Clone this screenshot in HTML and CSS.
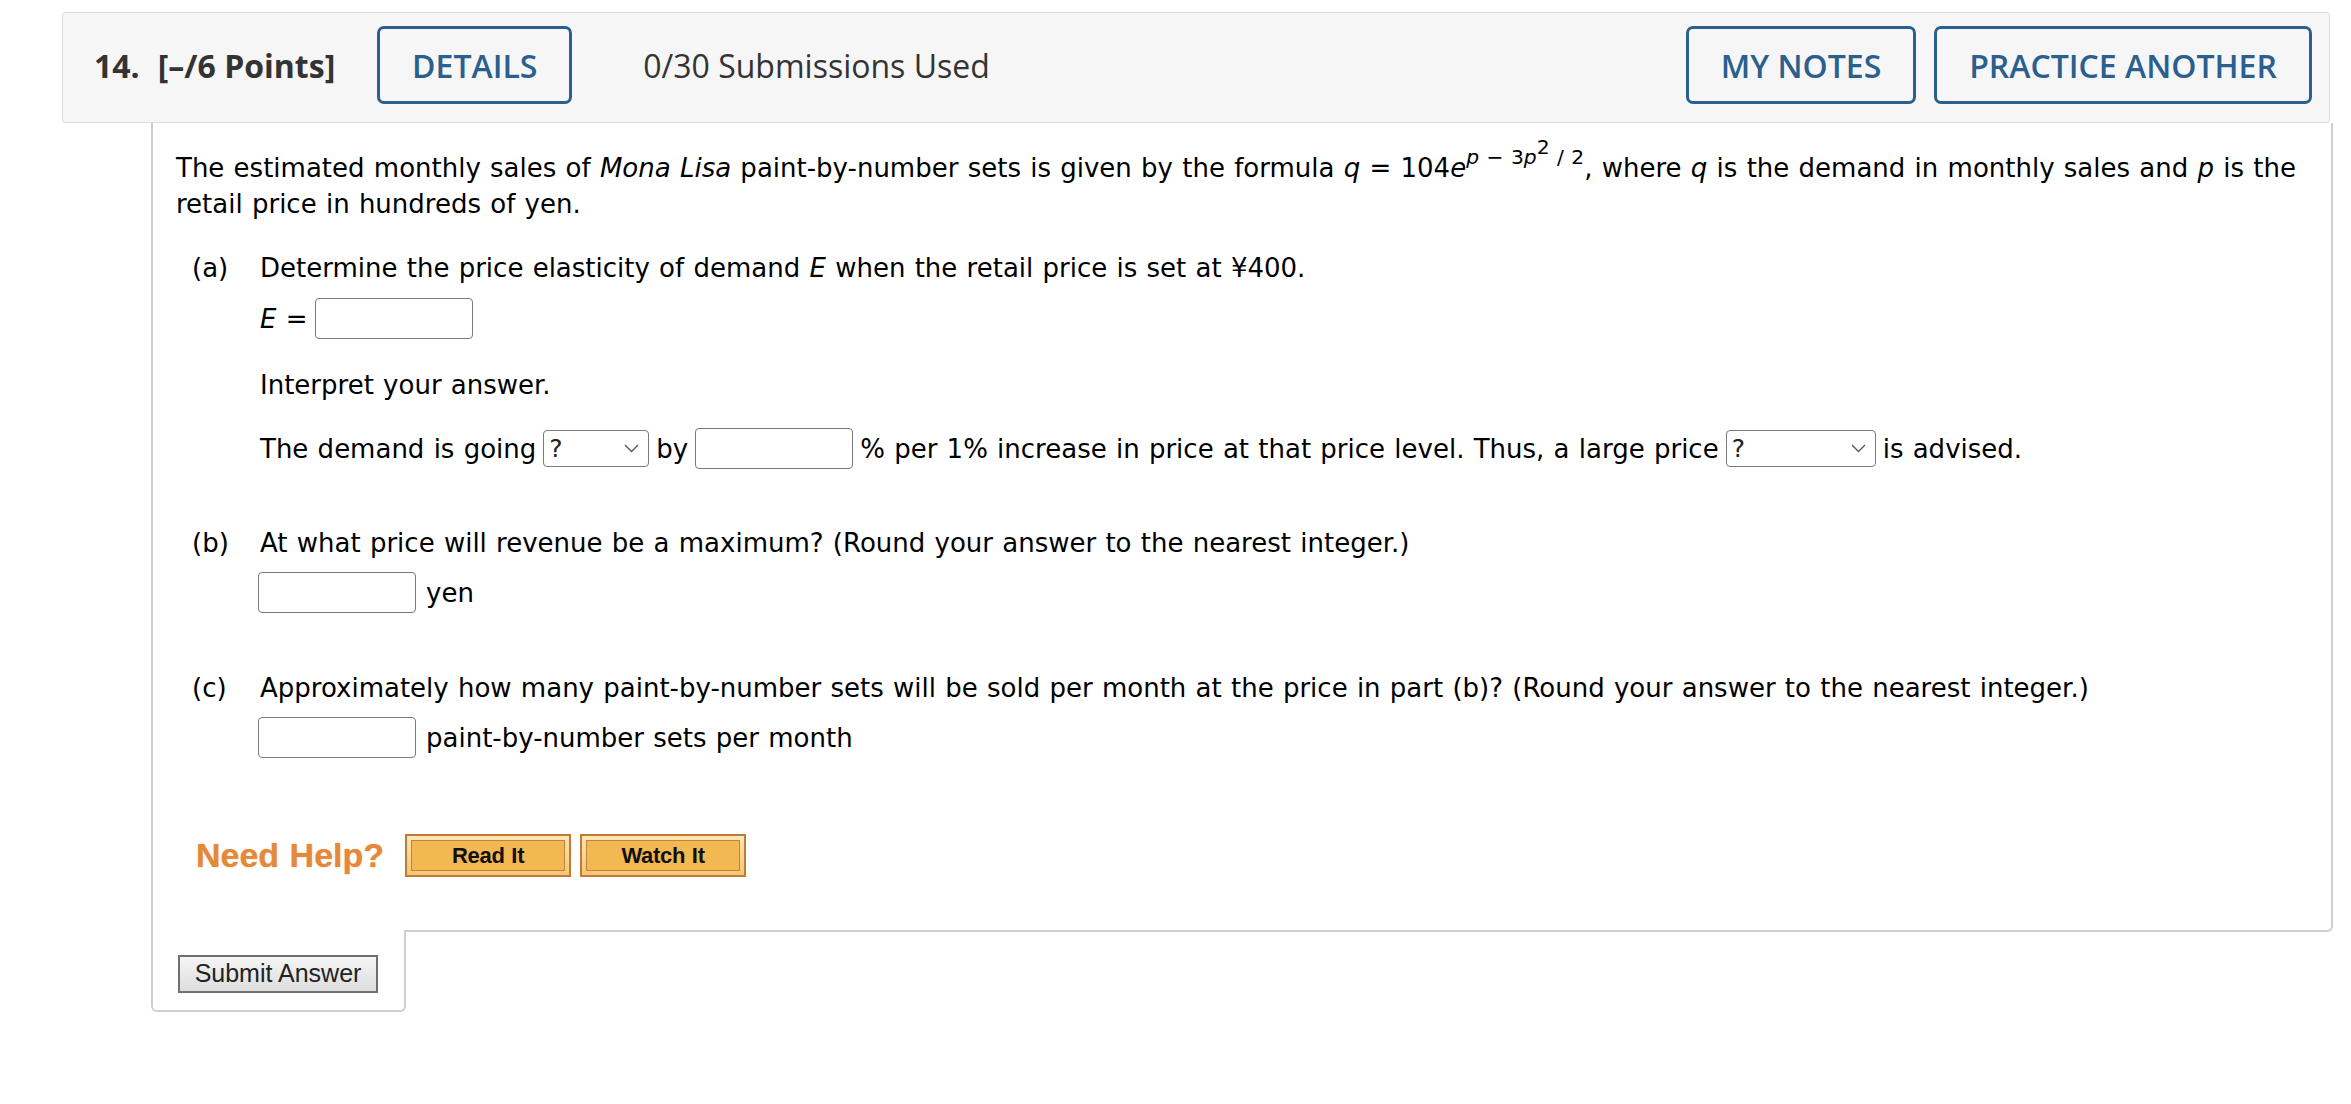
FILE: index.html
```html
<!DOCTYPE html>
<html>
<head>
<meta charset="utf-8">
<title>Question 14</title>
<link rel="stylesheet" href="styles.css">
</head>
<body>
<div class="page">
  <div class="qhead">
    <span class="qnum">14.</span>
    <span class="qpts">[–/6 Points]</span>
    <span class="hbtn details">DETAILS</span>
    <span class="subs">0/30 Submissions Used</span>
    <span class="spacer"></span>
    <span class="hbtn notes">MY NOTES</span>
    <span class="hbtn practice">PRACTICE ANOTHER</span>
  </div>
  <div class="qbody">
    <p class="intro">The estimated monthly sales of <i>Mona Lisa</i> paint-by-number sets is given by the formula <i>q</i> = 104<i>e</i><sup class="exp"><i>p</i> − 3<i>p</i><sup class="sq">2</sup> / 2</sup>, where <i>q</i> is the demand in monthly sales and <i>p</i> is the retail price in hundreds of yen.</p>

    <div class="part part-a">
      <span class="plabel">(a)</span>
      <div class="pbody">
        <div class="line">Determine the price elasticity of demand <i>E</i> when the retail price is set at ¥400.</div>
        <div class="row r-e"><span><i>E</i> =</span><input class="ans" type="text"></div>
        <div class="line interp">Interpret your answer.</div>
        <div class="row r-demand">
          <span>The demand is going</span>
          <span class="sel s1"><span class="q">?</span><svg width="15" height="9" viewBox="0 0 15 9"><path d="M1 1l6.5 6.5L14 1" fill="none" stroke="#555" stroke-width="1.3"/></svg></span>
          <span>by</span>
          <input class="ans" type="text">
          <span>% per 1% increase in price at that price level. Thus, a large price</span>
          <span class="sel s2"><span class="q">?</span><svg width="15" height="9" viewBox="0 0 15 9"><path d="M1 1l6.5 6.5L14 1" fill="none" stroke="#555" stroke-width="1.3"/></svg></span>
          <span>is advised.</span>
        </div>
      </div>
    </div>

    <div class="part part-b">
      <span class="plabel">(b)</span>
      <div class="pbody">
        <div class="line">At what price will revenue be a maximum? (Round your answer to the nearest integer.)</div>
        <div class="row r-unit"><input class="ans" type="text"><span>yen</span></div>
      </div>
    </div>

    <div class="part part-c">
      <span class="plabel">(c)</span>
      <div class="pbody">
        <div class="line">Approximately how many paint-by-number sets will be sold per month at the price in part (b)? (Round your answer to the nearest integer.)</div>
        <div class="row r-unit r-c"><input class="ans" type="text"><span>paint-by-number sets per month</span></div>
      </div>
    </div>

    <div class="help">
      <span class="needhelp">Need Help?</span>
      <span class="hb read"><span>Read It</span></span>
      <span class="hb watch"><span>Watch It</span></span>
    </div>
  </div>
  <div class="subtab">
    <button class="submit" type="button">Submit Answer</button>
  </div>
</div>
</body>
</html>
```

FILE: styles.css
```css
* {
  box-sizing: border-box;
}

body {
  margin: 0;
  background: #ffffff;
  font-family: "DejaVu Sans", Verdana, sans-serif;
  color: #000000;
}

.page {
  margin: 12px 0 0 62px;
  width: 2268px;
}

/* ---------- header ---------- */
.qhead {
  display: flex;
  align-items: center;
  height: 111px;
  padding: 13px 17px 18px 31px;
  background: #f6f6f6;
  border: 1px solid #dcdcdc;
  border-radius: 3px;
  font-family: "Open Sans", sans-serif;
  font-size: 32px;
  color: #333333;
}

.qnum,
.qpts {
  font-weight: 700;
}

.qpts {
  margin-left: 18px;
}

.hbtn {
  display: flex;
  align-items: center;
  justify-content: center;
  height: 78px;
  border: 3px solid #2b5f8e;
  border-radius: 7px;
  color: #2b5f8e;
  font-weight: 600;
  white-space: nowrap;
}

.details {
  width: 195px;
  margin-left: 42px;
}

.subs {
  margin-left: 71px;
}

.spacer {
  flex: 1;
}

.notes {
  width: 230px;
}

.practice {
  width: 378px;
  margin-left: 18px;
}

/* ---------- body ---------- */
.qbody {
  margin-left: 89px;
  margin-right: -3px;
  border: 2px solid #cfcfcf;
  border-top: 0;
  border-bottom-right-radius: 6px;
  padding: 24px 20px 53px 23px;
  font-size: 26px;
  word-spacing: 1px;
}

.intro {
  margin: 0;
  line-height: 36px;
}

.exp {
  font-size: 0.78em;
  line-height: 0;
  vertical-align: 0.62em;
}

.sq {
  font-size: 1em;
  line-height: 0;
  vertical-align: 0.5em;
}

.part {
  display: grid;
  grid-template-columns: 68px 1fr;
  margin-left: 16px;
}

.part-a {
  margin-top: 28px;
}

.part-b {
  margin-top: 55px;
}

.part-c {
  margin-top: 56px;
}

.plabel {
  line-height: 36px;
}

.line {
  line-height: 36px;
}

.row {
  display: flex;
  align-items: center;
  gap: 10px;
  height: 42px;
  white-space: nowrap;
  line-height: 36px;
}

.r-e {
  margin-top: 12px;
  gap: 7px;
}

.interp {
  margin-top: 27px;
}

.r-demand {
  margin-top: 25px;
  gap: 7px;
}

.r-unit {
  margin-top: 11px;
  margin-left: -2px;
}

.r-c {
  margin-top: 11px;
}

.ans {
  width: 158px;
  height: 41px;
  margin: 0;
  padding: 0 6px;
  border: 1.5px solid #7a7a7a;
  border-radius: 4px;
  background: #ffffff;
  font: 24px "DejaVu Sans", sans-serif;
}

.sel {
  display: flex;
  align-items: center;
  justify-content: space-between;
  height: 37px;
  padding: 0 9px 0 5px;
  border: 1.5px solid #7a7a7a;
  border-radius: 4px;
  background: #ffffff;
  font-size: 25px;
  color: #222222;
}

.s1 {
  width: 106px;
}

.s2 {
  width: 150px;
}

/* ---------- need help ---------- */
.help {
  display: flex;
  align-items: center;
  height: 42px;
  margin-top: 76px;
  padding-left: 20px;
}

.needhelp {
  font: bold 34px "Liberation Sans", Arial, sans-serif;
  color: #e4883a;
  text-shadow: 0 0 1.5px rgba(228, 136, 58, 0.6);
  margin-right: 12px;
}

.hb {
  display: block;
  width: 166px;
  height: 43px;
  margin-left: 9px;
  padding: 4px;
  border: 2px solid #c07b34;
  background: linear-gradient(#fde6b8, #f6c770);
}

.hb span {
  display: flex;
  align-items: center;
  justify-content: center;
  height: 100%;
  border: 1.5px solid #bf843f;
  background: #f3b852;
  font: bold 22px "Liberation Sans", Arial, sans-serif;
  letter-spacing: -0.3px;
  color: #111111;
}

/* ---------- submit tab ---------- */
.subtab {
  width: 255px;
  height: 82px;
  margin-left: 89px;
  margin-top: -2px;
  padding: 25px 0 0 25px;
  background: #ffffff;
  border: 2px solid #cfcfcf;
  border-top: 0;
  border-radius: 0 0 6px 6px;
  position: relative;
}

.submit {
  width: 200px;
  height: 38px;
  padding: 0;
  border: 2px solid #707070;
  background: linear-gradient(#f5f5f5, #dddddd);
  font: 25px "Liberation Sans", Arial, sans-serif;
  color: #222222;
}
```
